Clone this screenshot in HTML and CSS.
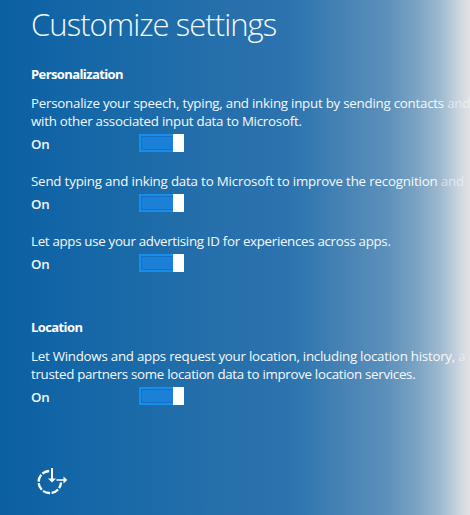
FILE: index.html
```
<!DOCTYPE html>
<html lang="en">
<head>
<meta charset="utf-8">
<title>Customize settings</title>
<link rel="stylesheet" href="styles.css">
</head>
<body>
<main class="page">
  <h1 class="title">Customize settings</h1>
  <section class="group">
    <h2 class="heading">Personalization</h2>
    <div class="setting">
      <p class="text"><span class="line l1">Personalize your speech, typing, and inking input by sending contacts <span class="faded">and</span></span><span class="line l2">with other associated input data to Microsoft.</span></p>
      <div class="control"><span class="state">On</span><span class="toggle"><span class="knob"></span></span></div>
    </div>
    <div class="setting">
      <p class="text"><span class="line l3">Send typing and inking data to Microsoft to improve the recognition <span class="faded">and</span></span></p>
      <div class="control"><span class="state">On</span><span class="toggle"><span class="knob"></span></span></div>
    </div>
    <div class="setting">
      <p class="text"><span class="line l4">Let apps use your advertising ID for experiences across apps.</span></p>
      <div class="control"><span class="state">On</span><span class="toggle"><span class="knob"></span></span></div>
    </div>
  </section>
  <section class="group location">
    <h2 class="heading">Location</h2>
    <div class="setting">
      <p class="text"><span class="line l5">Let Windows and apps request your location, including location history, <span class="faded">a</span></span><span class="line l6">trusted partners some location data to improve location services.</span></p>
      <div class="control"><span class="state">On</span><span class="toggle"><span class="knob"></span></span></div>
    </div>
  </section>
  <svg class="ease" width="34" height="30" viewBox="0 0 34 30" fill="none" stroke="#fff">
    <path d="M13.2 5A11 11 0 0 0 14 27A11 11 0 0 0 25 16.5" stroke-width="2.3" stroke-dasharray="7.4 1.6"/>
    <path d="M16 2V13" stroke-width="2"/>
    <path d="M12 12.5H20L16 16.5Z" fill="#fff" stroke="none"/>
    <path d="M20.5 14H29" stroke-width="1.5"/>
    <path d="M27.5 10.5L31.3 14L27.5 17.5Z" fill="#fff" stroke="none"/>
  </svg>
</main>
</body>
</html>
```
FILE: styles.css
```
* { box-sizing: border-box; }
body {
  margin: 0;
  font-family: "Open Sans", "Noto Sans", sans-serif;
  color: #f5f9fc;
}
.page {
  width: 470px;
  height: 515px;
  padding: 4px 0 0 31px;
  overflow: hidden;
  background: linear-gradient(to right, #0b60a3 0, #1265a6 60px, #1a6aa8 130px, #256fab 210px, #2b72ae 280px, #3178b0 305px, #4582b4 340px, #5b8fba 385px, #78a2c3 415px, #9fbad0 441px, #c9d4de 458px, #dde0e3 467px, #dfe1e4 470px);
}
.title {
  margin: 0;
  font-size: 31px;
  font-weight: 300;
  line-height: 40px;
  letter-spacing: -0.95px;
  white-space: nowrap;
}
.group { margin-top: 21px; }
.heading {
  margin: 0 0 11px;
  font-size: 13px;
  font-weight: 700;
  line-height: 18px;
  letter-spacing: -0.6px;
  color: #fff;
}
.setting { margin-bottom: 19px; }
.text {
  margin: 0;
  font-size: 13.3px;
  line-height: 18px;
}
.line { display: block; white-space: nowrap; }
.l1 { letter-spacing: -0.23px; }
.l2 { letter-spacing: -0.24px; }
.l3 { letter-spacing: -0.18px; }
.l4 { letter-spacing: -0.3px; }
.l5 { letter-spacing: -0.24px; }
.l6 { letter-spacing: -0.29px; }
.faded { opacity: .6; }
.control {
  display: flex;
  align-items: center;
  height: 18px;
  margin-top: 5px;
}
.state {
  width: 108px;
  font-size: 13.3px;
  font-weight: 600;
  line-height: 18px;
  letter-spacing: -0.3px;
}
.toggle {
  display: flex;
  justify-content: flex-end;
  width: 45px;
  height: 18px;
  margin-top: -2px;
  background: #1c80d9;
  box-shadow: inset 0 0 0 2px #168eeb, inset 0 0 0 3px #1670c2;
}
.knob { width: 11px; background: #fff; }
.location { margin-top: 45px; }
.ease { display: block; margin-top: 60px; margin-left: 5px; }
```
